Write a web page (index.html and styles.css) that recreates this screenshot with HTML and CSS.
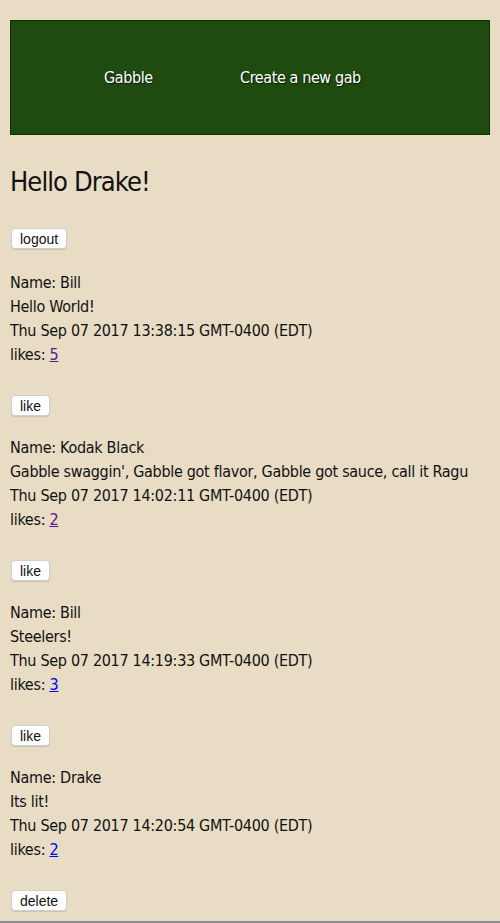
FILE: index.html
```html
<!DOCTYPE html>
<html>
<head>
<meta charset="utf-8">
<title>Gabble</title>
<link rel="stylesheet" href="styles.css">
</head>
<body>
<header class="nav">
  <a class="nav-link nav-home">Gabble</a>
  <a class="nav-link">Create a new gab</a>
</header>
<h1 class="greeting">Hello Drake!</h1>
<button class="btn logout">logout</button>
<div class="gab">
  <div class="gab-lines">
    <div>Name: Bill</div>
    <div>Hello World!</div>
    <div>Thu Sep 07 2017 13:38:15 GMT-0400 (EDT)</div>
    <div>likes: <a class="count visited" href="#">5</a></div>
  </div>
  <button class="btn">like</button>
</div>
<div class="gab">
  <div class="gab-lines">
    <div>Name: Kodak Black</div>
    <div>Gabble swaggin', Gabble got flavor, Gabble got sauce, call it Ragu</div>
    <div>Thu Sep 07 2017 14:02:11 GMT-0400 (EDT)</div>
    <div>likes: <a class="count visited" href="#">2</a></div>
  </div>
  <button class="btn">like</button>
</div>
<div class="gab">
  <div class="gab-lines">
    <div>Name: Bill</div>
    <div>Steelers!</div>
    <div>Thu Sep 07 2017 14:19:33 GMT-0400 (EDT)</div>
    <div>likes: <a class="count" href="#">3</a></div>
  </div>
  <button class="btn">like</button>
</div>
<div class="gab">
  <div class="gab-lines">
    <div>Name: Drake</div>
    <div>Its lit!</div>
    <div>Thu Sep 07 2017 14:20:54 GMT-0400 (EDT)</div>
    <div>likes: <a class="count" href="#">2</a></div>
  </div>
  <button class="btn">delete</button>
</div>
</body>
</html>
```
FILE: styles.css
```css
html {
  background: #e8dcc4;
  min-height: 100vh;
  box-sizing: border-box;
  border-bottom: 2px solid #8c8c8c;
}
body {
  margin: 0;
  padding: 20px 10px 0 10px;
  font-family: "DejaVu Sans Condensed", "Liberation Sans", sans-serif;
  font-size: 16px;
  letter-spacing: -0.3px;
  line-height: 24px;
  color: #111;
}
.nav {
  display: flex;
  align-items: center;
  height: 113px;
  background: #1f4a10;
  border: 1px solid #0c3208;
  padding-left: 93px;
}
.nav-link {
  color: #fff;
  font-size: 16px;
  letter-spacing: -0.4px;
  text-shadow: 1px 1px 1px rgba(0, 0, 0, 0.7);
}
.nav-home {
  width: 136px;
}
.greeting {
  font-size: 27px;
  font-weight: normal;
  letter-spacing: -0.9px;
  line-height: 36px;
  margin: 29px 0 28px 0;
}
.btn {
  display: block;
  font-family: "Liberation Sans", Arial, sans-serif;
  font-size: 14px;
  letter-spacing: 0;
  line-height: 16px;
  padding: 1px 8px;
  height: 21px;
  background: #fff;
  color: #111;
  border: 1px solid #cfcfcf;
  border-radius: 4px;
  box-shadow: 0 1px 1px rgba(0, 0, 0, 0.12);
  margin: 0 0 0 1px;
}
.logout {
  margin-bottom: 22px;
}
.gab {
  margin-bottom: 20px;
}
.gab:last-child {
  margin-bottom: 8px;
}
.gab-lines {
  margin-bottom: 28px;
}
.count {
  color: #0000ee;
}
.count.visited {
  color: #551a8b;
}
```
